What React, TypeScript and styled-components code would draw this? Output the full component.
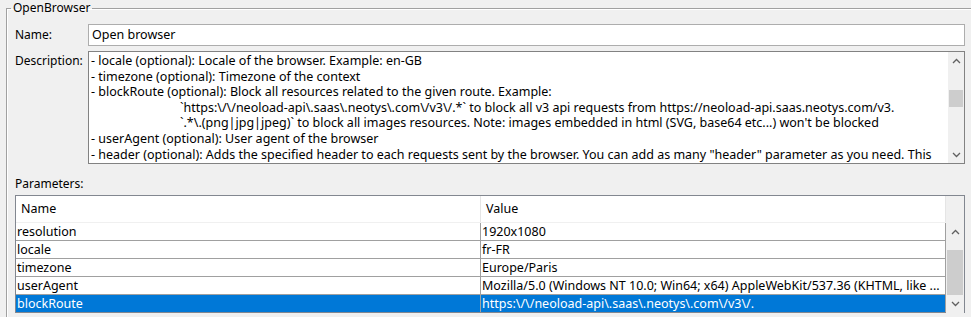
import React from "react";
import styled, { createGlobalStyle } from "styled-components";

const GlobalStyle = createGlobalStyle`
  html, body {
    margin: 0;
    padding: 0;
    background: #f0f0f0;
    overflow: hidden;
  }
  body {
    font-family: "Noto Sans", "Open Sans", sans-serif;
    font-size: 12px;
    color: #000;
  }
`;

const Page = styled.div`
  width: 971px;
  height: 317px;
  overflow: hidden;
`;

const GroupBox = styled.fieldset`
  margin: 0 0 0 6px;
  padding: 8px 6px 20px 8px;
  border: none;
  border-top: 1px solid #a0a0a0;
  border-left: 1px solid #a0a0a0;
  box-shadow: inset 1px 1px 0 #ffffff;
  min-width: 0;
`;

const Legend = styled.legend`
  padding: 0 2px;
  margin-left: -4px;
  line-height: 16px;
  height: 16px;
`;

const FormGrid = styled.div`
  display: grid;
  grid-template-columns: 73px minmax(0, 1fr);
  row-gap: 5px;
`;

const FieldLabel = styled.div<{ $top?: boolean }>`
  display: flex;
  align-items: ${(p) => (p.$top ? "flex-start" : "center")};
  padding-top: ${(p) => (p.$top ? "2px" : "0")};
  line-height: 16px;
`;

const TextBox = styled.div`
  height: 20px;
  border: 1px solid #adadad;
  background: #fff;
  display: flex;
  align-items: center;
  padding-left: 3px;
  line-height: 16px;
  font-size: 12.5px;
`;

const MemoBox = styled.div`
  height: 111px;
  border: 1px solid #828282;
  background: #fff;
  display: flex;
  min-width: 0;
`;

const MemoText = styled.div`
  flex: 1 1 0;
  min-width: 0;
  overflow: hidden;
  padding: 1px 0 0 2px;
  font-size: 12.5px;
`;

const MemoLine = styled.div<{ $indent?: boolean }>`
  white-space: pre;
  line-height: 15.6px;
  padding-left: ${(p) => (p.$indent ? "89px" : "0")};
`;

const SectionLabel = styled.div`
  grid-column: 1 / -1;
  line-height: 16px;
  margin-top: 7px;
`;

const TableFrame = styled.div`
  grid-column: 1 / -1;
  border: 1px solid #828790;
  background: #fff;
  display: flex;
  height: 116px;
  margin-top: -2px;
  font-size: 12.5px;
`;

const TableMain = styled.div`
  flex: 1 1 0;
  display: flex;
  flex-direction: column;
  min-width: 0;
`;

const Row = styled.div<{ $header?: boolean; $selected?: boolean; $last?: boolean }>`
  display: grid;
  grid-template-columns: 465px minmax(0, 1fr);
  height: ${(p) => (p.$header ? "27px" : p.$last ? "17px" : "18px")};
  box-sizing: border-box;
  border-bottom: ${(p) =>
    p.$last ? "none" : p.$header ? "1px solid #f0f0f0" : "1px solid #a0a0a0"};
  background: ${(p) => (p.$selected ? "#0078d7" : "#fff")};
  color: ${(p) => (p.$selected ? "#fff" : "#000")};
`;

const Cell = styled.div<{ $header?: boolean }>`
  border-right: 1px solid ${(p) => (p.$header ? "#e5e5e5" : "#a0a0a0")};
  padding-left: ${(p) => (p.$header ? "5px" : "1px")};
  display: flex;
  align-items: center;
  white-space: pre;
  overflow: hidden;
  line-height: 16px;
  min-width: 0;
`;

const ScrollColumn = styled.div`
  width: 18px;
  flex: 0 0 18px;
  display: grid;
  grid-template-rows: 27px 1fr;
  background: #f0f0f0;
`;

const ScrollBar = styled.div<{ $width: number }>`
  width: ${(p) => p.$width}px;
  flex: 0 0 ${(p) => p.$width}px;
  display: flex;
  flex-direction: column;
  background: #f0f0f0;
`;

const ArrowButton = styled.div<{ $size: number }>`
  height: ${(p) => p.$size}px;
  flex: 0 0 ${(p) => p.$size}px;
  display: flex;
  align-items: center;
  justify-content: center;
  color: #606060;
`;

const Track = styled.div`
  flex: 1;
  display: flex;
  flex-direction: column;
`;

const Thumb = styled.div<{ $offset: number; $height: number }>`
  margin: ${(p) => p.$offset}px 1px 0 1px;
  height: ${(p) => p.$height}px;
  background: #cdcdcd;
`;

const Chevron = ({ up }: { up?: boolean }) => (
  <svg width="9" height="6" viewBox="0 0 9 6">
    <polyline
      points={up ? "1,5 4.5,1.5 8,5" : "1,1 4.5,4.5 8,1"}
      fill="none"
      stroke="currentColor"
      strokeWidth="1.3"
    />
  </svg>
);

const VScroll = ({
  width,
  arrow,
  offset,
  thumb,
}: {
  width: number;
  arrow: number;
  offset: number;
  thumb: number;
}) => (
  <ScrollBar $width={width}>
    <ArrowButton $size={arrow}>
      <Chevron up />
    </ArrowButton>
    <Track>
      <Thumb $offset={offset} $height={thumb} />
    </Track>
    <ArrowButton $size={arrow}>
      <Chevron />
    </ArrowButton>
  </ScrollBar>
);

const descLines: { text: string; indent?: boolean }[] = [
  { text: "- locale (optional): Locale of the browser. Example: en-GB" },
  { text: "- timezone (optional): Timezone of the context" },
  { text: "- blockRoute (optional): Block all resources related to the given route. Example:" },
  {
    text: "`https:\\/\\/neoload-api\\.saas\\.neotys\\.com\\/v3\\/.*` to block all v3 api requests from https://neoload-api.saas.neotys.com/v3.",
    indent: true,
  },
  {
    text: "`.*\\.(png|jpg|jpeg)` to block all images resources. Note: images embedded in html (SVG, base64 etc...) won't be blocked",
    indent: true,
  },
  { text: "- userAgent (optional): User agent of the browser" },
  {
    text: '- header (optional): Adds the specified header to each requests sent by the browser. You can add as many "header" parameter as you need. This',
  },
];

const params: [string, string][] = [
  ["resolution", "1920x1080"],
  ["locale", "fr-FR"],
  ["timezone", "Europe/Paris"],
  ["userAgent", "Mozilla/5.0 (Windows NT 10.0; Win64; x64) AppleWebKit/537.36 (KHTML, like ..."],
  ["blockRoute", "https:\\/\\/neoload-api\\.saas\\.neotys\\.com\\/v3\\/."],
];

export default function App() {
  return (
    <Page>
      <GlobalStyle />
      <GroupBox>
        <Legend>OpenBrowser</Legend>
        <FormGrid>
          <FieldLabel>Name:</FieldLabel>
          <TextBox>Open browser</TextBox>
          <FieldLabel $top>Description:</FieldLabel>
          <MemoBox>
            <MemoText>
              {descLines.map((l, i) => (
                <MemoLine key={i} $indent={l.indent}>
                  {l.text}
                </MemoLine>
              ))}
            </MemoText>
            <VScroll width={16} arrow={17} offset={21} thumb={17} />
          </MemoBox>
          <SectionLabel>Parameters:</SectionLabel>
          <TableFrame>
            <TableMain>
              <Row $header>
                <Cell $header>Name</Cell>
                <Cell $header>Value</Cell>
              </Row>
              {params.map(([n, v], i) => (
                <Row key={n} $selected={i === params.length - 1} $last={i === params.length - 1}>
                  <Cell>{n}</Cell>
                  <Cell>{v}</Cell>
                </Row>
              ))}
            </TableMain>
            <ScrollColumn>
              <div />
              <VScroll width={18} arrow={18} offset={9} thumb={45} />
            </ScrollColumn>
          </TableFrame>
        </FormGrid>
      </GroupBox>
    </Page>
  );
}
